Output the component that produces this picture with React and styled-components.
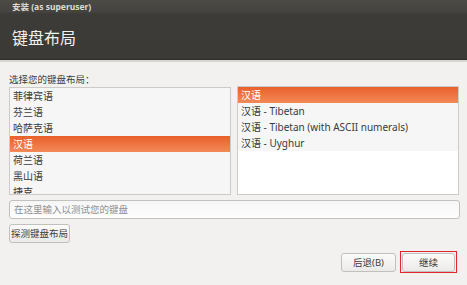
import React from "react"
import styled, { createGlobalStyle } from "styled-components"

const Global = createGlobalStyle`
  html, body { margin: 0; padding: 0; }
  body {
    background: #f2f1f0;
    font-family: "Noto Sans", "Noto Sans CJK SC", sans-serif;
    color: #3c3c3c;
  }
`;

const Window = styled.div`
  width: 467px;
  height: 285px;
  display: flex;
  flex-direction: column;
  overflow: hidden;
  background: #f2f1f0;
`;

const Header = styled.header`
  height: 60px;
  background: linear-gradient(#4d4b46 0, #45433f 12px, #3d3b37 14px, #3c3a36 100%);
  border-bottom: 2px solid #d9d7d3;
  box-shadow: inset 0 -1px 0 #2f2e2b;
  display: flex;
  flex-direction: column;
  padding-left: 12px;
`;

const TitleText = styled.div`
  height: 14px;
  line-height: 14px;
  font-size: 8.5px;
  font-weight: 700;
  color: #dfdbd2;
`;

const Heading = styled.h1`
  margin: 0;
  margin-top: 12px;
  font-size: 16px;
  font-weight: 400;
  color: #f2f1ee;
  font-family: "Noto Sans CJK SC", sans-serif;
  line-height: 22px;
`;

const Body = styled.main`
  flex: 1;
  display: flex;
  flex-direction: column;
  padding: 11px 8px 0 9px;
`;

const Label = styled.div`
  font-size: 9.5px;
  line-height: 12px;
  color: #3c3c3c;
  height: 14px;
  font-family: "Noto Sans CJK SC", sans-serif;
`;

const Lists = styled.div`
  display: flex;
  gap: 6px;
  height: 108px;
  flex-shrink: 0;
`;

const ListBox = styled.div`
  flex: ${p => p.$flex};
  border: 1px solid #cdcbc7;
  background: ${p => p.$bg};
  overflow: hidden;
  margin-top: ${p => p.$top}px;
`;

const Row = styled.div`
  height: 16px;
  line-height: 16px;
  font-size: 10px;
  padding-left: 3px;
  color: ${p => (p.$sel ? "#ffffff" : "#3a3a3a")};
  background: ${p => (p.$sel ? "linear-gradient(#e8602b, #f38a58)" : "#f6f6f6")};
  white-space: nowrap;
`;

const Input = styled.div`
  margin-top: 5px;
  width: 445px;
  height: 17px;
  border: 1px solid #c3c1bd;
  border-radius: 3px;
  background: linear-gradient(#f6f6f6, #fdfdfd);
  font-size: 9.5px;
  line-height: 17px;
  color: #8f8f8f;
  padding-left: 4px;
  flex-shrink: 0;
`;

const Button = styled.button`
  height: 19px;
  padding: 0;
  width: ${p => p.$w}px;
  border: 1px solid #c2c0bc;
  border-radius: 3px;
  background: linear-gradient(#fbfbfb, #ebeae8);
  font-family: "Noto Sans", "Noto Sans CJK SC", sans-serif;
  font-size: 9.5px;
  color: #3c3c3c;
  box-sizing: border-box;
  line-height: 17px;
  white-space: nowrap;
  display: block;
`;

const Highlight = styled.div`
  border: 1.5px solid #e3262c;
  padding: 0.5px 1px;
  margin-top: -2px;
`;

const DetectRow = styled.div`
  margin-top: 5px;
  display: flex;
`;

const Footer = styled.div`
  margin-top: 10px;
  display: flex;
  justify-content: flex-end;
  align-items: flex-start;
  gap: 4px;
  padding-right: 2px;
`;

const left = ["菲律宾语", "芬兰语", "哈萨克语", "汉语", "荷兰语", "黑山语", "捷克"];
const right = ["汉语", "汉语 - Tibetan", "汉语 - Tibetan (with ASCII numerals)", "汉语 - Uyghur"];

export default function App() {
  return (
    <Window>
      <Global />
      <Header>
        <TitleText>安装 (as superuser)</TitleText>
        <Heading>键盘布局</Heading>
      </Header>
      <Body>
        <Label>选择您的键盘布局：</Label>
        <Lists>
          <ListBox $flex="0 0 220px" $bg="#f6f6f6" $top={0}>
            {left.map((t, i) => (
              <Row key={t} $sel={i === 3}>{t}</Row>
            ))}
          </ListBox>
          <ListBox $flex="1" $bg="#ffffff" $top={-1}>
            {right.map((t, i) => (
              <Row key={t} $sel={i === 0}>{t}</Row>
            ))}
          </ListBox>
        </Lists>
        <Input>在这里输入以测试您的键盘</Input>
        <DetectRow>
          <Button $w={61}>探测键盘布局</Button>
        </DetectRow>
        <Footer>
          <Button $w={55}>后退(B)</Button>
          <Highlight>
            <Button $w={53}>继续</Button>
          </Highlight>
        </Footer>
      </Body>
    </Window>
  )
}
